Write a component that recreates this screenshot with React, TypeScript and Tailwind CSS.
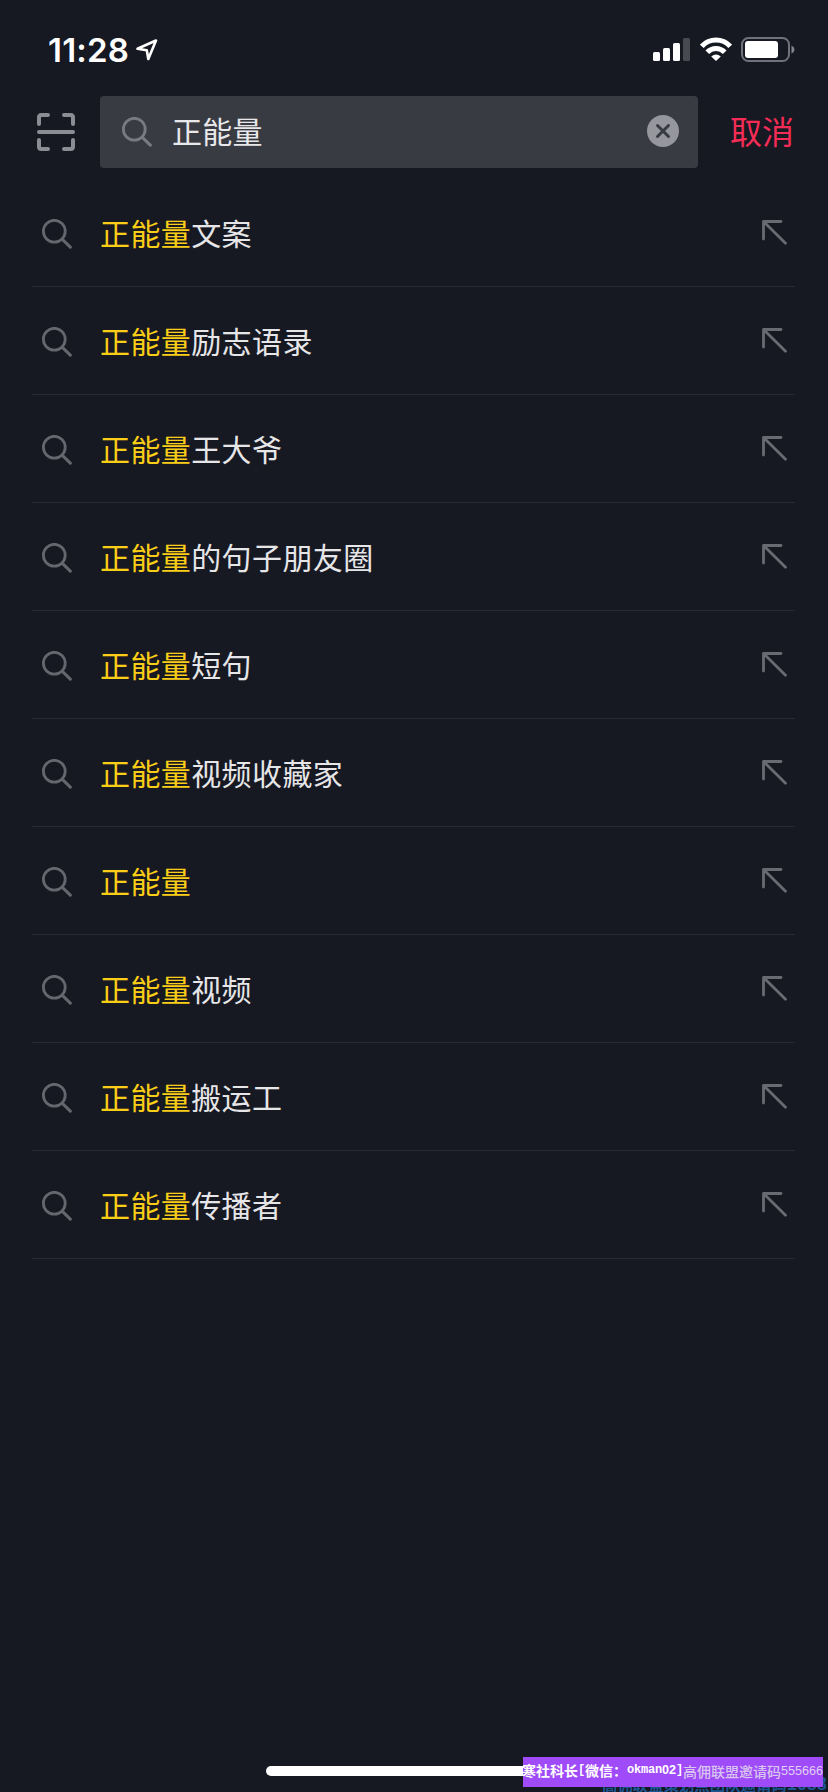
const KEYWORD = "正能量";

const suggestions = [
  "文案",
  "励志语录",
  "王大爷",
  "的句子朋友圈",
  "短句",
  "视频收藏家",
  "",
  "视频",
  "搬运工",
  "传播者",
];

const SearchIcon = () => (
  <svg className="h-[30px] w-[30px] shrink-0" viewBox="0 0 30 30" fill="none" stroke="currentColor">
    <circle cx="12.3" cy="12.2" r="10.9" strokeWidth="2.8" />
    <path d="M20.5 20.5L28.3 28.2" strokeWidth="3.1" strokeLinecap="round" />
  </svg>
);

const ScanIcon = () => (
  <svg
    className="h-[38px] w-[38px] shrink-0 text-[#8b8c94]"
    viewBox="0 0 38 38"
    fill="none"
    stroke="currentColor"
    strokeWidth="4"
    strokeLinecap="round"
    strokeLinejoin="round"
  >
    <path d="M2 11V4.5Q2 2 4.5 2H11M27 2H33.5Q36 2 36 4.5V11M2 27V33.5Q2 36 4.5 36H11M27 36H33.5Q36 36 36 33.5V27" />
    <path d="M2 19H36" />
  </svg>
);

const ArrowIcon = () => (
  <svg
    className="h-[25px] w-[25px] text-[#696a72]"
    viewBox="0 0 25 25"
    fill="none"
    stroke="currentColor"
    strokeWidth="2.8"
    strokeLinecap="round"
    strokeLinejoin="round"
  >
    <path d="M19 1.5H1.5V19M2 2L23.5 23.3" />
  </svg>
);

const StatusBar = () => (
  <div className="flex h-24 shrink-0 items-start pl-12 pr-[33px] pt-[37px] text-white">
    <span className="mt-[-5px] h-[36px] w-[84px] whitespace-nowrap font-['Inter'] text-[33px] font-semibold leading-[36px] tracking-[0.2px]">
      11:28
    </span>
    <svg className="ml-1 mt-[2px] h-[22px] w-[22px]" viewBox="0 0 22 22" fill="none" stroke="currentColor">
      <path d="M1.5 9.8L20 1.5L12.3 20L10.8 11.3Z" strokeWidth="2.6" strokeLinejoin="round" />
    </svg>
    <div className="ml-auto flex">
      <svg className="mt-px h-[23px] w-[37px]" viewBox="0 0 37 23" fill="currentColor">
        <rect x="0" y="14" width="7" height="9" rx="1.5" />
        <rect x="10" y="10" width="7" height="13" rx="1.5" />
        <rect x="20" y="5" width="7" height="18" rx="1.5" />
        <rect x="30" y="0" width="7" height="23" rx="1.5" className="text-[#484951]" />
      </svg>
      <svg className="ml-[10px] h-[24px] w-[32px]" viewBox="0 0 32 24" fill="none" stroke="currentColor" strokeWidth="5">
        <path d="M1.8 9.3C9.5 1 22.5 1 30.2 9.3" />
        <path d="M7.3 15.3C12 10.2 20 10.2 24.7 15.3" />
        <path d="M11.2 19.4Q16 15.4 20.8 19.4L16 24Z" fill="currentColor" stroke="none" />
      </svg>
      <svg className="ml-[9px] h-[25px] w-[54px]" viewBox="0 0 54 25">
        <rect x="1" y="1" width="47" height="23" rx="6.5" fill="none" stroke="#70717a" strokeWidth="2" />
        <rect x="4" y="4" width="33" height="17" rx="3" fill="white" />
        <path d="M50.5 8.5Q53.5 10 53.5 12.5T50.5 16.5Z" fill="#85868d" />
      </svg>
    </div>
  </div>
);

const SearchBar = () => (
  <div className="flex h-[72px] shrink-0 items-center pl-[37px]">
    <ScanIcon />
    <div className="ml-[25px] flex h-[72px] w-[598px] items-center rounded bg-[#393b43] pl-[22px] pr-[19px]">
      <div className="text-[#797a82]">
        <SearchIcon />
      </div>
      <span className="mb-1 ml-[20px] text-[30px] tracking-[0.3px] text-[#e8e8ea]">{KEYWORD}</span>
      <svg className="mb-[3px] ml-auto h-8 w-8" viewBox="0 0 32 32">
        <circle cx="16" cy="16" r="16" fill="#96979d" />
        <path d="M10.5 10.5L21.5 21.5M21.5 10.5L10.5 21.5" stroke="#393b43" strokeWidth="3" strokeLinecap="round" />
      </svg>
    </div>
    <button className="mb-1 ml-[32px] whitespace-nowrap text-[32px] text-[#f52c55]">取消</button>
  </div>
);

const SuggestionRow = ({ rest }: { rest: string }) => (
  <li className="flex h-[108px] items-center border-b border-[#282a33] pl-[10px] pr-2">
    <div className="mt-[2px] text-[#65666e]">
      <SearchIcon />
    </div>
    <span className="ml-[28px] text-[30px] tracking-[0.4px] text-[#e6e6e8]">
      <span className="text-[#facd16]">{KEYWORD}</span>
      {rest}
    </span>
    <div className="ml-auto">
      <ArrowIcon />
    </div>
  </li>
);

const App = () => {
  return (
    <div className="relative flex h-[1792px] w-[828px] flex-col overflow-hidden bg-[#161822] font-['Noto_Sans_CJK_SC',sans-serif]">
      <StatusBar />
      <SearchBar />
      <ul className="mt-[11px] pl-8 pr-[33px]">
        {suggestions.map((rest) => (
          <SuggestionRow key={rest} rest={rest} />
        ))}
      </ul>
      <div className="mx-auto mb-4 mt-auto h-[10px] w-[296px] rounded-full bg-white" />

      <div className="absolute left-[602px] top-[1773px] flex items-center whitespace-nowrap font-bold leading-[22px] text-[#1b5791]">
        <span className="text-[15.4px]">高佣联盟策划点团队邀请码</span>
        <span className="font-['Liberation_Sans'] text-[18px]">1688</span>
      </div>
      <div className="absolute left-[523px] top-[1757px] h-[30px] w-[300px] overflow-hidden whitespace-nowrap bg-[#9f4bf9]">
        <div className="ml-[-1px] flex items-center pt-[2px] text-[14px] leading-[20px]">
          <span className="font-bold text-white">寒社科长</span>
          <span className="w-[7px] font-['Liberation_Mono'] text-[12px] font-bold text-white">[</span>
          <span className="font-bold text-white">微信：</span>
          <span className="w-[35px] font-['Liberation_Mono'] text-[12px] font-bold tracking-[-0.2px] text-white">okman</span>
          <span className="w-[14px] font-['Liberation_Sans'] text-[12.6px] font-bold text-white">02</span>
          <span className="w-[7px] font-['Liberation_Mono'] text-[12px] font-bold text-white">]</span>
          <span className="mt-[2px] font-medium text-[#d9c6f0]">高佣联盟邀请码</span>
          <span className="mt-[2px] font-['Liberation_Sans'] text-[12.6px] text-[#e0d0f4]">555666</span>
        </div>
      </div>
    </div>
  );
};

export default App;
